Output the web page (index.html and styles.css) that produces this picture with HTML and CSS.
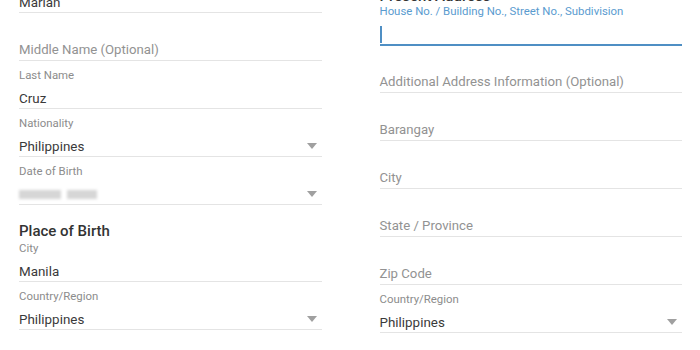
FILE: index.html
```html
<!DOCTYPE html>
<html lang="en">
<head>
    <meta charset="UTF-8">
    <meta name="viewport" content="width=device-width, initial-scale=1.0">
    <title>Account Details</title>
    <link rel="stylesheet" href="styles.css">
</head>
<body>
    <div class="form">
        <section class="column">
            <h2 class="section-title">Personal Information</h2>
            <div class="field first">
                <div class="label">First Name</div>
                <div class="value">Marian</div>
            </div>
            <div class="field bare">
                <div class="value placeholder">Middle Name (Optional)</div>
            </div>
            <div class="field">
                <div class="label">Last Name</div>
                <div class="value">Cruz</div>
            </div>
            <div class="field select">
                <div class="label">Nationality</div>
                <div class="value">Philippines <span class="arrow"></span></div>
            </div>
            <div class="field select">
                <div class="label">Date of Birth</div>
                <div class="value"><span class="blur wide"></span><span class="blur"></span> <span class="arrow"></span></div>
            </div>

            <h2 class="section-title sub">Place of Birth</h2>
            <div class="field first">
                <div class="label">City</div>
                <div class="value">Manila</div>
            </div>
            <div class="field select">
                <div class="label">Country/Region</div>
                <div class="value">Philippines <span class="arrow"></span></div>
            </div>
        </section>

        <section class="column address">
            <h2 class="section-title">Present Address</h2>
            <div class="field first focused">
                <div class="label">House No. / Building No., Street No., Subdivision</div>
                <div class="value"><span class="caret"></span></div>
            </div>
            <div class="field bare">
                <div class="value placeholder">Additional Address Information (Optional)</div>
            </div>
            <div class="field bare">
                <div class="value placeholder">Barangay</div>
            </div>
            <div class="field bare">
                <div class="value placeholder">City</div>
            </div>
            <div class="field bare">
                <div class="value placeholder">State / Province</div>
            </div>
            <div class="field bare">
                <div class="value placeholder">Zip Code</div>
            </div>
            <div class="field select">
                <div class="label">Country/Region</div>
                <div class="value">Philippines <span class="arrow"></span></div>
            </div>
        </section>
    </div>
</body>
</html>
```

FILE: styles.css
```css
body {
    margin: 0;
    background-color: #ffffff;
    font-family: Roboto, 'Noto Sans', sans-serif;
    color: #3a3a3a;
    overflow: hidden;
}
.form {
    display: grid;
    grid-template-columns: 1fr 1fr;
    column-gap: 58px;
    padding: 0 18px 0 19px;
    margin-top: -48px;
}
.column.address {
    padding-top: 34px;
}
.section-title {
    margin: 0;
    font-size: 15px;
    line-height: 20px;
    font-weight: 500;
    color: #333333;
}
.column.address .section-title {
    margin-bottom: -2px;
}
.section-title.sub {
    margin-top: 17px;
    line-height: 19px;
}
.field {
    padding-top: 7px;
    border-bottom: 1px solid #e4e4e4;
}
.field.first {
    padding-top: 0;
}
.field.bare {
    padding-top: 25px;
}
.label {
    font-size: 11.4px;
    line-height: 14px;
    color: #8c8c8c;
}
.value {
    display: flex;
    align-items: center;
    margin-top: 6px;
    height: 20px;
    font-size: 13.4px;
    color: #3a3a3a;
}
.field.bare .value {
    margin-top: 0;
    height: 22px;
}
.value.placeholder {
    font-size: 13.2px;
    color: #929292;
}
.field.select .value {
    padding-right: 5px;
}
.arrow {
    margin-left: auto;
    width: 0;
    height: 0;
    border-left: 5px solid transparent;
    border-right: 5px solid transparent;
    border-top: 6px solid #a0a0a0;
}
.blur {
    display: inline-block;
    width: 30px;
    height: 9px;
    margin-right: 6px;
    background-color: #d6d6d6;
    filter: blur(1.5px);
}
.blur.wide {
    width: 42px;
}
.field.focused {
    border-bottom: 2px solid #4f8fc4;
    margin-bottom: -1px;
}
.field.focused .label {
    color: #5a9bcf;
}
.caret {
    display: block;
    width: 2px;
    height: 17px;
    margin-top: 1px;
    background-color: #4f8fc4;
}
```
